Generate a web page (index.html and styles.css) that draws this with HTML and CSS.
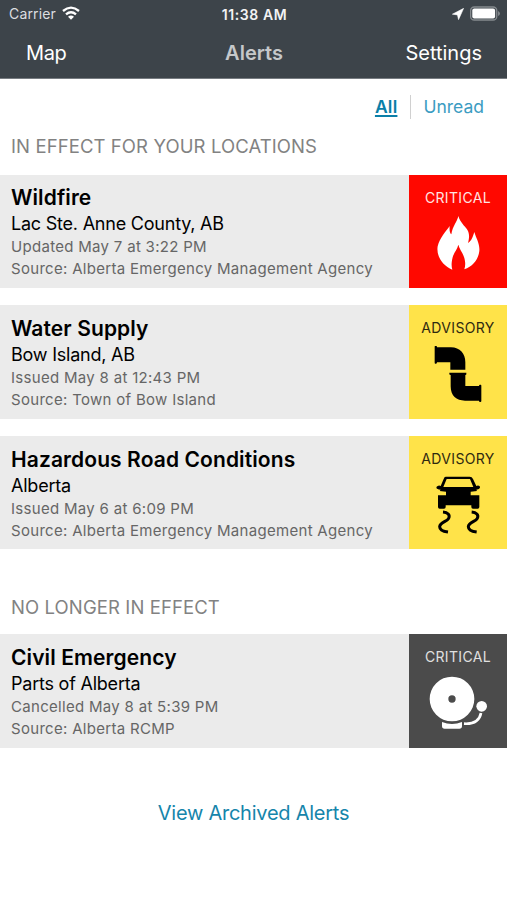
FILE: index.html
```html
<!DOCTYPE html>
<html lang="en">
<head>
<meta charset="utf-8">
<title>Alerts</title>
<link rel="stylesheet" href="styles.css">
</head>
<body>
<header class="header">
  <div class="status">
    <div class="status-left"><span class="carrier">Carrier</span>
      <svg class="wifi" viewBox="0 0 54 42"><g fill="none" stroke="#fff" stroke-width="7"><path d="M3 15Q27-5 51 15"/><path d="M12 25Q27 12 42 25"/></g><path fill="#fff" d="M18 32Q27 25 36 32L27 41Z"/></svg>
    </div>
    <span class="clock">11:38 AM</span>
    <div class="status-right">
      <svg class="locate" viewBox="0 0 33 33"><path fill="#fff" stroke="#fff" stroke-width="1.5" stroke-linejoin="round" d="M32 1L1 17L15 19L18 32Z"/></svg>
      <svg class="battery" viewBox="0 0 92 46"><rect x="2" y="3" width="80" height="40" rx="11" fill="none" stroke="#858a8e" stroke-width="4"/><rect x="7" y="8" width="70" height="30" rx="6" fill="#fff"/><path d="M86 15Q92 18 92 23T86 31Z" fill="#858a8e"/></svg>
    </div>
  </div>
  <nav class="nav"><a class="nav-map">Map</a><h1 class="nav-title">Alerts</h1><a class="nav-settings">Settings</a></nav>
</header>
<main>
  <div class="filter"><a class="filter-all">All</a><span class="divider"></span><a class="filter-unread">Unread</a></div>
  <h2 class="section">IN EFFECT FOR YOUR LOCATIONS</h2>
  <div class="list">
    <article class="card">
      <div class="info"><h3 class="title">Wildfire</h3><p class="place">Lac Ste. Anne County, AB</p><p class="meta">Updated May 7 at 3:22 PM</p><p class="meta">Source: Alberta Emergency Management Agency</p></div>
      <div class="tile tile-critical"><span class="level">CRITICAL</span>
        <svg class="icon" viewBox="27 112 294 225"><path fill="#fff" d="M175 136C172 153 158 165 154 191C149 187 148 177 149 166C139 181 119 201 113 227C108 257 129 286 157 297C154 287 154 276 158 260C162 245 172 236 175 222C179 237 188 245 193 262C197 277 196 286 193 296C219 287 235 267 238 241C240 219 228 202 223 184C219 196 216 210 204 217C212 188 204 177 192 165C183 154 178 147 175 136Z"/></svg>
      </div>
    </article>
    <article class="card">
      <div class="info"><h3 class="title">Water Supply</h3><p class="place">Bow Island, AB</p><p class="meta">Issued May 8 at 12:43 PM</p><p class="meta">Source: Town of Bow Island</p></div>
      <div class="tile tile-advisory"><span class="level">ADVISORY</span>
        <svg class="icon" viewBox="27 114 294 225"><path d="M104 139Q104 138 106 138H109Q111 138 111 142H153C180 143 196 160 196 187V209H151V187H111Q111 191 108 191H106Q104 191 104 188ZM148 218H199V223Q199 225 196 225V258H237Q237 254 240 254H242Q244 254 244 257V303Q244 306 241 306H240Q237 306 237 302H195C169 302 152 287 152 259V225Q148 225 148 222Z"/></svg>
      </div>
    </article>
    <article class="card">
      <div class="info"><h3 class="title">Hazardous Road Conditions</h3><p class="place">Alberta</p><p class="meta">Issued May 6 at 6:09 PM</p><p class="meta">Source: Alberta Emergency Management Agency</p></div>
      <div class="tile tile-advisory"><span class="level">ADVISORY</span>
        <svg class="icon" viewBox="27 116 294 225"><path fill-rule="evenodd" d="M137 139H209Q216 139 219 146L229 167Q232 165 237 166Q241 167 240 172Q239 177 229 178L231 182L212 184V195H238V230Q238 235 233 235H219Q214 235 214 230V225H137V230Q137 235 132 235H119Q114 235 114 230V195H138V184L119 182L122 178Q110 177 109 172Q109 167 115 166Q119 165 122 167L131 146Q133 139 137 139ZM140 146L130 170H220L210 146Z"/><path fill="none" stroke="#000" stroke-width="9" d="M129 245C143 246 151 254 146 264C141 274 120 276 119 289C119 299 130 303 144 305M215 245C229 246 237 254 232 264C227 274 206 276 205 289C205 299 216 303 230 305"/></svg>
      </div>
    </article>
  </div>
  <h2 class="section section-past">NO LONGER IN EFFECT</h2>
  <article class="card">
    <div class="info"><h3 class="title">Civil Emergency</h3><p class="place">Parts of Alberta</p><p class="meta">Cancelled May 8 at 5:39 PM</p><p class="meta">Source: Alberta RCMP</p></div>
    <div class="tile tile-past"><span class="level">CRITICAL</span>
      <svg class="icon" viewBox="27 112 294 225"><g fill="#fff"><path fill-rule="evenodd" d="M89 208A67 67 0 1 1 223 208A67 67 0 1 1 89 208ZM145 208A11 11 0 1 0 167 208A11 11 0 1 0 145 208Z"/><path d="M126 277Q156 289 186 277V289Q186 297 178 297H134Q126 297 126 289Z"/><circle cx="245" cy="230" r="16"/></g><path d="M243 250C239 272 224 284 192 282" fill="none" stroke="#fff" stroke-width="8"/></svg>
    </div>
  </article>
  <a class="archive">View Archived Alerts</a>
</main>
</body>
</html>
```
FILE: styles.css
```css
* { box-sizing: border-box; }
body { margin: 0; background: #fff; color: #000; font-family: Inter, "Liberation Sans", sans-serif; }
h1, h2, h3, p { margin: 0; font-weight: 400; }
svg { display: block; flex: none; }
.header { height: 79px; background: #3d444a; color: #fff; border-bottom: 1px solid #777c81; }
.status { display: grid; grid-template-columns: 1fr auto 1fr; align-items: center; height: 28px; padding: 0 7px 0 9px; }
.status-left, .status-right { display: flex; align-items: center; }
.status-left { gap: 6px; }
.carrier { font-size: 14px; line-height: 28px; letter-spacing: 0.15px; color: #dcdee0; }
.wifi { width: 18px; height: 14px; margin-top: -2px; }
.clock { font-size: 14px; font-weight: 600; letter-spacing: 0.6px; color: #f2f2f3; }
.status-right { justify-content: flex-end; gap: 6px; }
.locate { width: 12px; height: 12px; }
.battery { width: 30px; height: 15px; margin-top: -1px; }
.nav { display: grid; grid-template-columns: 1fr auto 1fr; align-items: center; height: 50px; padding: 0 25px 0 26px; font-size: 20px; line-height: 50px; }
.nav-map { letter-spacing: -0.4px; }
.nav-title { font-size: 20px; font-weight: 600; color: #c5c8ca; }
.nav-settings { text-align: right; }
.filter { display: flex; align-items: center; justify-content: flex-end; height: 56px; padding-right: 23px; font-size: 17.5px; line-height: 24px; color: #3b9cc2; }
.filter-all { font-weight: 600; letter-spacing: 0.2px; color: #0a7fa8; text-decoration: underline; text-decoration-thickness: 1.5px; text-underline-offset: 2px; }
.divider { width: 1px; height: 24px; margin: 0 12px 0 13px; background: #d0d0d0; }
.section { padding-left: 11px; height: 39.5px; font-size: 18.5px; line-height: 23px; letter-spacing: 0.1px; color: #828282; }
.section-past { margin-top: 46.5px; height: 38.5px; }
.list { display: grid; gap: 17.5px; }
.card { display: grid; grid-template-columns: 409px 98px; height: 113.3px; background: #ebebeb; }
.info { padding: 9.5px 0 0 11px; white-space: nowrap; }
.title { font-size: 21px; font-weight: 600; line-height: 27px; letter-spacing: 0.1px; }
.place { font-size: 18px; line-height: 26px; letter-spacing: -0.22px; }
.meta { font-size: 15px; line-height: 21.7px; letter-spacing: 0.3px; color: #666; position: relative; top: -0.8px; }
.tile { text-align: center; }
.level { display: block; height: 33px; padding-top: 13px; font-size: 14px; line-height: 20px; letter-spacing: 0.35px; }
.icon { width: 98px; height: 75px; }
.tile-critical { background: #ff0800; color: #ffe4e2; }
.tile-advisory { background: #ffe349; color: #2f2a10; }
.tile-past { background: #4b4b4b; color: #e0e0e0; }
.archive { display: block; margin-top: 51px; text-align: center; font-size: 20px; line-height: 28px; letter-spacing: -0.25px; color: #1685ab; }
```
